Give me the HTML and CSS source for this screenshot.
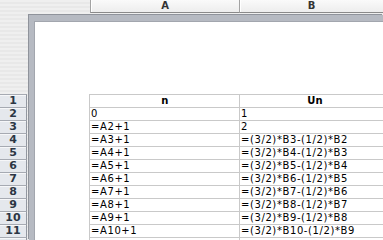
FILE: index.html
```html
<!DOCTYPE html>
<html>
<head lang="fr">
    <meta charset="UTF-8">
    <title>Suite Un</title>
    <link rel="stylesheet" href="styles.css">
</head>
<body>
<div id="sheet">
    <!-- en-têtes de colonnes -->
    <div id="colhead">
        <div class="col col-a">A</div>
        <div class="col col-b">B</div>
    </div>

    <div id="main">
        <!-- numéros de lignes -->
        <ul id="rowhead">
            <li>1</li>
            <li>2</li>
            <li>3</li>
            <li>4</li>
            <li>5</li>
            <li>6</li>
            <li>7</li>
            <li>8</li>
            <li>9</li>
            <li>10</li>
            <li>11</li>
            <li></li>
        </ul>

        <!-- page (mise en page) -->
        <div id="page">
            <div id="grid">
                <div class="cell head">n</div>
                <div class="cell head">Un</div>
                <div class="cell">0</div>
                <div class="cell">1</div>
                <div class="cell">=A2+1</div>
                <div class="cell">2</div>
                <div class="cell">=A3+1</div>
                <div class="cell">=(3/2)*B3-(1/2)*B2</div>
                <div class="cell">=A4+1</div>
                <div class="cell">=(3/2)*B4-(1/2)*B3</div>
                <div class="cell">=A5+1</div>
                <div class="cell">=(3/2)*B5-(1/2)*B4</div>
                <div class="cell">=A6+1</div>
                <div class="cell">=(3/2)*B6-(1/2)*B5</div>
                <div class="cell">=A7+1</div>
                <div class="cell">=(3/2)*B7-(1/2)*B6</div>
                <div class="cell">=A8+1</div>
                <div class="cell">=(3/2)*B8-(1/2)*B7</div>
                <div class="cell">=A9+1</div>
                <div class="cell">=(3/2)*B9-(1/2)*B8</div>
                <div class="cell">=A10+1</div>
                <div class="cell">=(3/2)*B10-(1/2)*B9</div>
                <div class="cell"></div>
                <div class="cell"></div>
            </div>
        </div>
    </div>
</div>
</body>
</html>
```

FILE: styles.css
```css
* {
    margin: 0;
    padding: 0;
    box-sizing: border-box;
}

li {
    list-style: none;
}

html, body {
    width: 383px;
    height: 240px;
    overflow: hidden;
}

body {
    font-family: "DejaVu Sans", Verdana, sans-serif;
    background: repeating-linear-gradient(#efefef 0, #efefef 2px, #e8e8e8 2px, #e8e8e8 4px);
}

#sheet {
    display: flex;
    flex-direction: column;
    height: 240px;
}

/* en-têtes A / B */
#colhead {
    display: flex;
    height: 13px;
    margin-bottom: 1px;
    padding-left: 90px;
}

#colhead .col {
    height: 13px;
    border-left: 1px solid #a3a3a3;
    border-bottom: 1px solid #8a8a8a;
    background: linear-gradient(#fafafa, #ededed);
    box-shadow: inset 1px 0 0 #ffffff;
    color: #333;
    font-size: 10px;
    font-weight: bold;
    line-height: 11px;
    text-align: center;
}

#colhead .col-a {
    width: 149px;
}

#colhead .col-b {
    flex: 1;
}

#main {
    display: flex;
    flex: 1;
    min-height: 0;
}

/* numéros de lignes */
#rowhead {
    width: 27px;
    margin-right: 2px;
    padding-top: 80px;
    flex-shrink: 0;
}

#rowhead li {
    height: 13px;
    border-right: 1px solid #9297a0;
    border-bottom: 1px solid #a6aab2;
    background: #e5e8ed;
    box-shadow: inset 0 1px 0 #f6f7f9;
    color: #2c3644;
    font-size: 11px;
    font-weight: bold;
    line-height: 12px;
    text-align: center;
}

#rowhead li:first-child {
    height: 14px;
    border-top: 1px solid #a6aab2;
}

/* page */
#page {
    flex: 1;
    margin-top: 1px;
    padding: 73px 0 0 55px;
    border-top: 6px solid #b6bac2;
    border-left: 5px solid #b6bac2;
    background: #fff;
    box-shadow: -1px -1px 0 #8f939b, inset 1px 1px 0 #a2a6ae;
    overflow: hidden;
}

#grid {
    display: grid;
    grid-template-columns: 150px 150px;
    width: 301px;
    border-top: 1px solid #c9c9c9;
    border-left: 1px solid #c9c9c9;
}

#grid .cell {
    height: 13px;
    padding-left: 1px;
    border-right: 1px solid #c9c9c9;
    border-bottom: 1px solid #c9c9c9;
    color: #000;
    font-size: 10px;
    letter-spacing: 0.6px;
    line-height: 12px;
    white-space: nowrap;
}

#grid .head {
    font-weight: bold;
    text-align: center;
    letter-spacing: 0.2px;
}
```
